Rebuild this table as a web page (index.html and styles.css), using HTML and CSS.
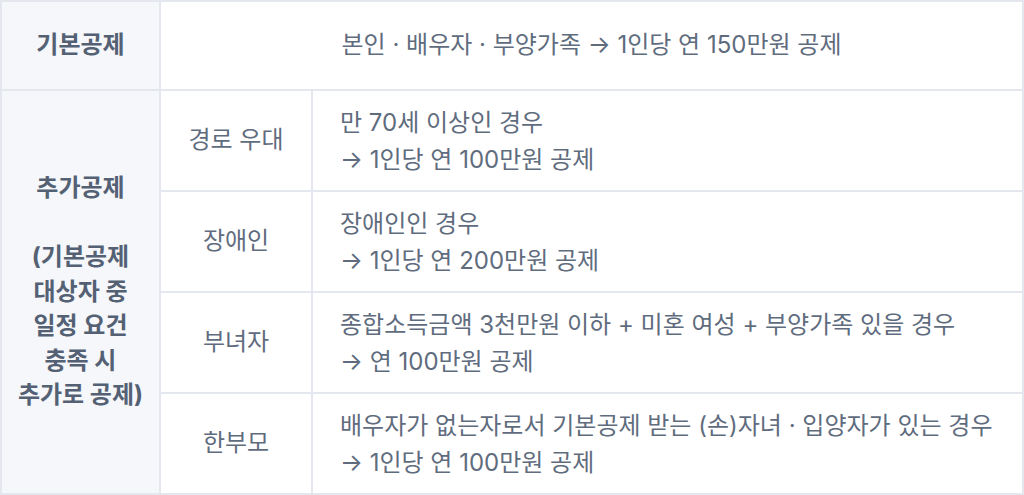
FILE: index.html
```html
<!DOCTYPE html>
<html lang="ko">
<head>
<meta charset="utf-8">
<link rel="stylesheet" href="styles.css">
</head>
<body>
<table class="deduct">
  <colgroup>
    <col class="c1"><col class="c2"><col class="c3">
  </colgroup>
  <tr class="row-basic">
    <th class="head">기본공제</th>
    <td class="merged" colspan="2">본인 · 배우자 · 부양가족 → 1인당 연 150만원 공제</td>
  </tr>
  <tr class="row-sub">
    <th class="head" rowspan="4">추가공제<br><br>(기본공제<br>대상자 중<br>일정 요건<br>충족 시<br>추가로 공제)</th>
    <td class="name">경로 우대</td>
    <td class="desc">만 70세 이상인 경우<br>→ 1인당 연 100만원 공제</td>
  </tr>
  <tr class="row-sub">
    <td class="name">장애인</td>
    <td class="desc">장애인인 경우<br>→ 1인당 연 200만원 공제</td>
  </tr>
  <tr class="row-sub">
    <td class="name">부녀자</td>
    <td class="desc">종합소득금액 3천만원 이하 + 미혼 여성 + 부양가족 있을 경우<br>→ 연 100만원 공제</td>
  </tr>
  <tr class="row-sub">
    <td class="name">한부모</td>
    <td class="desc">배우자가 없는자로서 기본공제 받는 (손)자녀 · 입양자가 있는 경우<br>→ 1인당 연 100만원 공제</td>
  </tr>
</table>
</body>
</html>
```

FILE: styles.css
```css
html, body {
  margin: 0;
  padding: 0;
  background: #ffffff;
}

body {
  font-family: "Inter", "Noto Sans CJK KR", sans-serif;
  color: #5f6c7e;
}

.deduct {
  width: 1024px;
  table-layout: fixed;
  border-collapse: separate;
  border-spacing: 0;
  border-top: 2px solid #e4e7ed;
  border-left: 2px solid #e4e7ed;
}

.c1 { width: 159px; }
.c2 { width: 152px; }

.deduct th,
.deduct td {
  border-right: 2px solid #e4e7ed;
  border-bottom: 2px solid #e4e7ed;
  padding: 0;
  font-size: 24px;
  line-height: 34.5px;
  vertical-align: middle;
}

.head {
  background: #f5f7fa;
  font-weight: 700;
  text-align: center;
  color: #546174;
}

.row-basic th,
.row-basic td {
  height: 87px;
}

.row-sub td {
  height: 99px;
}

.merged {
  text-align: center;
  font-weight: 400;
}

.name {
  text-align: center;
}

.desc {
  text-align: left;
  padding-left: 27px !important;
  line-height: 37px !important;
}
```
